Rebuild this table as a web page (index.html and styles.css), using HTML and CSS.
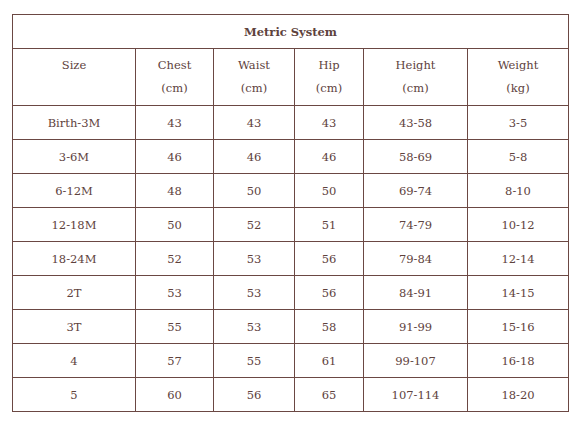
FILE: index.html
```html
<!DOCTYPE html>
<html>
<head>
<meta charset="utf-8">
<link rel="stylesheet" href="styles.css">
</head>
<body>
<table class="size-table">
  <colgroup>
    <col class="c1"><col class="c2"><col class="c3"><col class="c4"><col class="c5"><col class="c6">
  </colgroup>
  <tr class="title-row"><th colspan="6">Metric System</th></tr>
  <tr class="head-row">
    <td>Size</td>
    <td>Chest<br>(cm)</td>
    <td>Waist<br>(cm)</td>
    <td>Hip<br>(cm)</td>
    <td>Height<br>(cm)</td>
    <td>Weight<br>(kg)</td>
  </tr>
  <tr><td>Birth-3M</td><td>43</td><td>43</td><td>43</td><td>43-58</td><td>3-5</td></tr>
  <tr><td>3-6M</td><td>46</td><td>46</td><td>46</td><td>58-69</td><td>5-8</td></tr>
  <tr><td>6-12M</td><td>48</td><td>50</td><td>50</td><td>69-74</td><td>8-10</td></tr>
  <tr><td>12-18M</td><td>50</td><td>52</td><td>51</td><td>74-79</td><td>10-12</td></tr>
  <tr><td>18-24M</td><td>52</td><td>53</td><td>56</td><td>79-84</td><td>12-14</td></tr>
  <tr><td>2T</td><td>53</td><td>53</td><td>56</td><td>84-91</td><td>14-15</td></tr>
  <tr><td>3T</td><td>55</td><td>53</td><td>58</td><td>91-99</td><td>15-16</td></tr>
  <tr><td>4</td><td>57</td><td>55</td><td>61</td><td>99-107</td><td>16-18</td></tr>
  <tr><td>5</td><td>60</td><td>56</td><td>65</td><td>107-114</td><td>18-20</td></tr>
</table>
</body>
</html>
```
FILE: styles.css
```css
html, body {
  margin: 0;
  padding: 0;
  background: #ffffff;
}
body {
  padding: 14px 0 0 12px;
  font-family: "DejaVu Serif", "Liberation Serif", serif;
  color: #5e423d;
}
.size-table {
  border-collapse: collapse;
  table-layout: fixed;
  width: 556px;
  font-size: 11.5px;
}
.c1 { width: 123px; }
.c2 { width: 78px; }
.c3 { width: 81px; }
.c4 { width: 69px; }
.c5 { width: 104px; }
.c6 { width: 101px; }
.size-table th,
.size-table td {
  border: 1px solid #6b4843;
  text-align: center;
  vertical-align: middle;
  padding: 0;
  height: 33px;
  font-weight: normal;
}
.title-row th {
  font-weight: bold;
  height: 33px;
}
.head-row td {
  height: 57px;
  line-height: 23px;
  vertical-align: top;
  padding-top: 5px;
  box-sizing: border-box;
}
```
